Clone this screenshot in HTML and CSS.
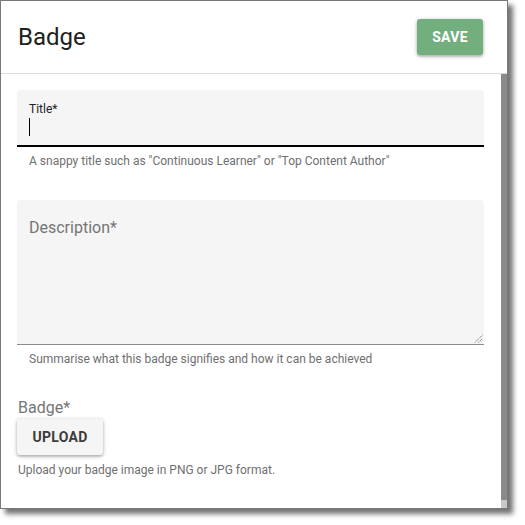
FILE: index.html
```html
<!DOCTYPE html>
<html lang="en">
<head>
<meta charset="utf-8">
<title>Badge</title>
<link rel="stylesheet" href="styles.css">
</head>
<body>
<div class="window">
  <header class="dlg-header">
    <h1 class="dlg-title">Badge</h1>
    <button class="btn btn-save" type="button">SAVE</button>
  </header>
  <div class="dlg-main">
    <div class="dlg-content">
      <div class="field">
        <div class="filled focused">
          <div class="field-label">Title*</div>
          <span class="caret"></span>
        </div>
        <p class="helper">A snappy title such as "Continuous Learner" or "Top Content Author"</p>
      </div>
      <div class="field field-desc">
        <div class="filled textarea">
          <div class="placeholder">Description*</div>
          <svg class="grip" width="9" height="9" viewBox="0 0 9 9">
            <line x1="1" y1="8.5" x2="8.5" y2="1" stroke="#555" stroke-width="1" stroke-dasharray="1 1"/>
            <line x1="4.5" y1="8.5" x2="8.5" y2="4.5" stroke="#555" stroke-width="1" stroke-dasharray="1 1"/>
          </svg>
        </div>
        <p class="helper">Summarise what this badge signifies and how it can be achieved</p>
      </div>
      <div class="upload">
        <div class="upload-label">Badge*</div>
        <button class="btn btn-upload" type="button">UPLOAD</button>
        <p class="helper helper-upload">Upload your badge image in PNG or JPG format.</p>
      </div>
    </div>
    <div class="scrollbar"><div class="scroll-thumb"></div><div class="scroll-end"></div></div>
  </div>
</div>
</body>
</html>
```

FILE: styles.css
```css
html, body {
  margin: 0;
  padding: 0;
  background: #ffffff;
}

body {
  font-family: Roboto, "Liberation Sans", Arial, sans-serif;
  width: 525px;
  height: 525px;
  overflow: hidden;
}

.window {
  width: 506px;
  height: 507px;
  border: 1px solid #787878;
  background: #ffffff;
  box-shadow: 5px 5px 5px rgba(0, 0, 0, 0.55);
  display: flex;
  flex-direction: column;
}

.dlg-header {
  height: 72px;
  border-bottom: 1px solid #dcdcdc;
  display: flex;
  align-items: center;
  justify-content: space-between;
  padding: 0 24px 0 17px;
  flex: none;
}

.dlg-title {
  margin: 0;
  font-size: 24px;
  font-weight: 400;
  color: #212121;
  line-height: 32px;
}

.btn {
  font-family: Roboto, "Liberation Sans", Arial, sans-serif;
  font-weight: 700;
  font-size: 14px;
  letter-spacing: 0.3px;
  border: none;
  border-radius: 3px;
  height: 36px;
  padding: 0 16px;
  box-shadow: 0 1px 4px rgba(0, 0, 0, 0.28), 0 2px 2px rgba(0, 0, 0, 0.12);
  cursor: pointer;
}

.btn-save {
  width: 66px;
  background: #73ae7f;
  color: #ffffff;
  padding: 0;
}

.dlg-main {
  flex: 1;
  display: flex;
  min-height: 0;
}

.dlg-content {
  flex: 1;
  padding: 16px 17px 0 16px;
}

.scrollbar {
  width: 6px;
  display: flex;
  flex-direction: column;
}

.scroll-thumb {
  flex: 1;
  background: #8a8a8a;
}

.scroll-end {
  height: 8px;
  background: #c9c9c9;
}

.filled {
  background: #f5f5f5;
  border-radius: 4px 4px 0 0;
  box-sizing: border-box;
  padding: 11px 12px 0 12px;
}

.focused {
  height: 57px;
  border-bottom: 2px solid #000000;
}

.field-label {
  font-size: 12px;
  line-height: 16px;
  color: #222222;
}

.caret {
  display: block;
  width: 1px;
  height: 18px;
  margin-top: 1px;
  background: #000000;
}

.helper {
  margin: 6px 0 0 12px;
  font-size: 12px;
  line-height: 16px;
  color: #6f6f6f;
}

.field-desc {
  margin-top: 31px;
}

.textarea {
  height: 145px;
  border-bottom: 1px solid #8c8c8c;
  padding-top: 16px;
  position: relative;
}

.placeholder {
  font-size: 16px;
  line-height: 24px;
  color: #757575;
}

.grip {
  position: absolute;
  right: 1px;
  bottom: 1px;
}

.upload {
  margin-top: 31px;
}

.upload-label {
  font-size: 16px;
  line-height: 20px;
  color: #757575;
  padding-left: 1px;
}

.btn-upload {
  margin-top: 1px;
  width: 86px;
  padding: 0;
  background: #f5f5f5;
  color: #3c3c3c;
}

.helper-upload {
  margin: 7px 0 0 1px;
}
```
